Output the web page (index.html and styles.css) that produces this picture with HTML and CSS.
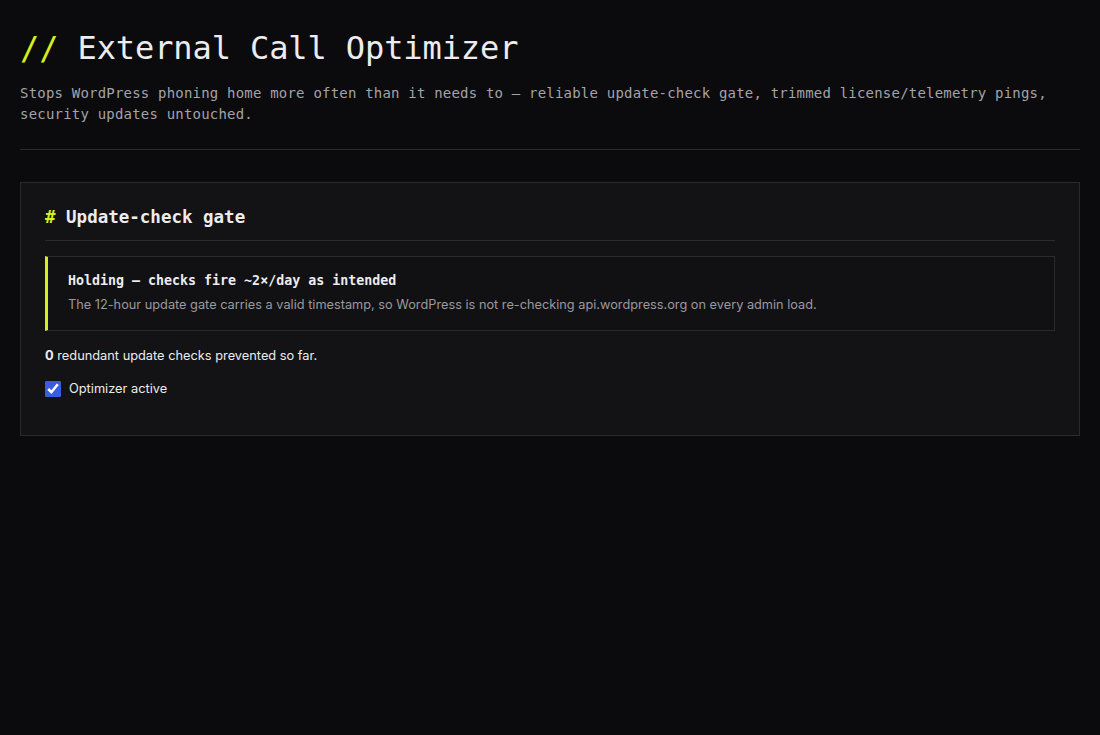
FILE: index.html
```html
<!DOCTYPE html>
<html lang="en">
<head>
<meta charset="utf-8">
<title>External Call Optimizer</title>
<link rel="stylesheet" href="styles.css">
</head>
<body>
<div class="page">
  <header class="head">
    <h1 class="title"><span class="accent">//</span> External Call Optimizer</h1>
    <p class="lede">Stops WordPress phoning home more often than it needs to — reliable update-check gate, trimmed license/telemetry pings, security updates untouched.</p>
  </header>
  <section class="card">
    <h2 class="card-title"><span class="accent">#</span> Update-check gate</h2>
    <div class="callout">
      <div class="callout-title">Holding — checks fire ~2×/day as intended</div>
      <div class="callout-text">The 12-hour update gate carries a valid timestamp, so WordPress is not re-checking api.wordpress.org on every admin load.</div>
    </div>
    <p class="stat"><strong>0</strong> redundant update checks prevented so far.</p>
    <label class="toggle"><input type="checkbox" class="check" checked> Optimizer active</label>
  </section>
</div>
</body>
</html>
```
FILE: styles.css
```css
html, body {
  margin: 0;
  padding: 0;
  background: #0b0a0d;
  color: #e8e8ea;
}
body {
  font-family: Inter, "Noto Sans", sans-serif;
  min-height: 735px;
}
.page {
  padding: 28px 20px 20px;
}
.accent {
  color: #d4ef1c;
}
.head {
  border-bottom: 1px solid #2a292e;
  padding-bottom: 24px;
  margin-bottom: 32px;
}
.title {
  font-family: "DejaVu Sans Mono", "Liberation Mono", monospace;
  font-weight: 400;
  font-size: 32px;
  line-height: 40px;
  margin: 0 0 15px;
  color: #ececee;
  letter-spacing: -0.1px;
}
.lede {
  font-family: "DejaVu Sans Mono", "Liberation Mono", monospace;
  font-size: 14px;
  letter-spacing: 0.2px;
  line-height: 21px;
  color: #a3a3a8;
  margin: 0;
}
.card {
  background: #131215;
  border: 1px solid #2a292e;
  padding: 20px 24px 37px;
}
.card-title {
  font-family: "DejaVu Sans Mono", "Liberation Mono", monospace;
  font-size: 17.5px;
  font-weight: 700;
  line-height: 28px;
  margin: 0 0 15px;
  padding-bottom: 9px;
  border-bottom: 1px solid #2a292e;
  color: #ececee;
}
.callout {
  border: 1px solid #2a292e;
  border-left: 3px solid #d4ef1c;
  background: #111013;
  padding: 15px 20px 16px;
}
.callout-title {
  font-family: "DejaVu Sans Mono", "Liberation Mono", monospace;
  font-weight: 700;
  font-size: 13.3px;
  line-height: 18px;
  color: #ececee;
  margin-bottom: 6px;
}
.callout-text {
  font-size: 12.75px;
  line-height: 18px;
  color: #9a9a9f;
}
.stat {
  font-size: 12.8px;
  line-height: 18px;
  margin: 16px 0 15px;
  color: #ececee;
}
.stat strong {
  font-weight: 700;
}
.toggle {
  display: flex;
  align-items: center;
  gap: 8px;
  font-size: 12.8px;
  line-height: 18px;
  color: #ececee;
}
.check {
  margin: 0;
  width: 16px;
  height: 16px;
  accent-color: #3a5ce0;
}
```
